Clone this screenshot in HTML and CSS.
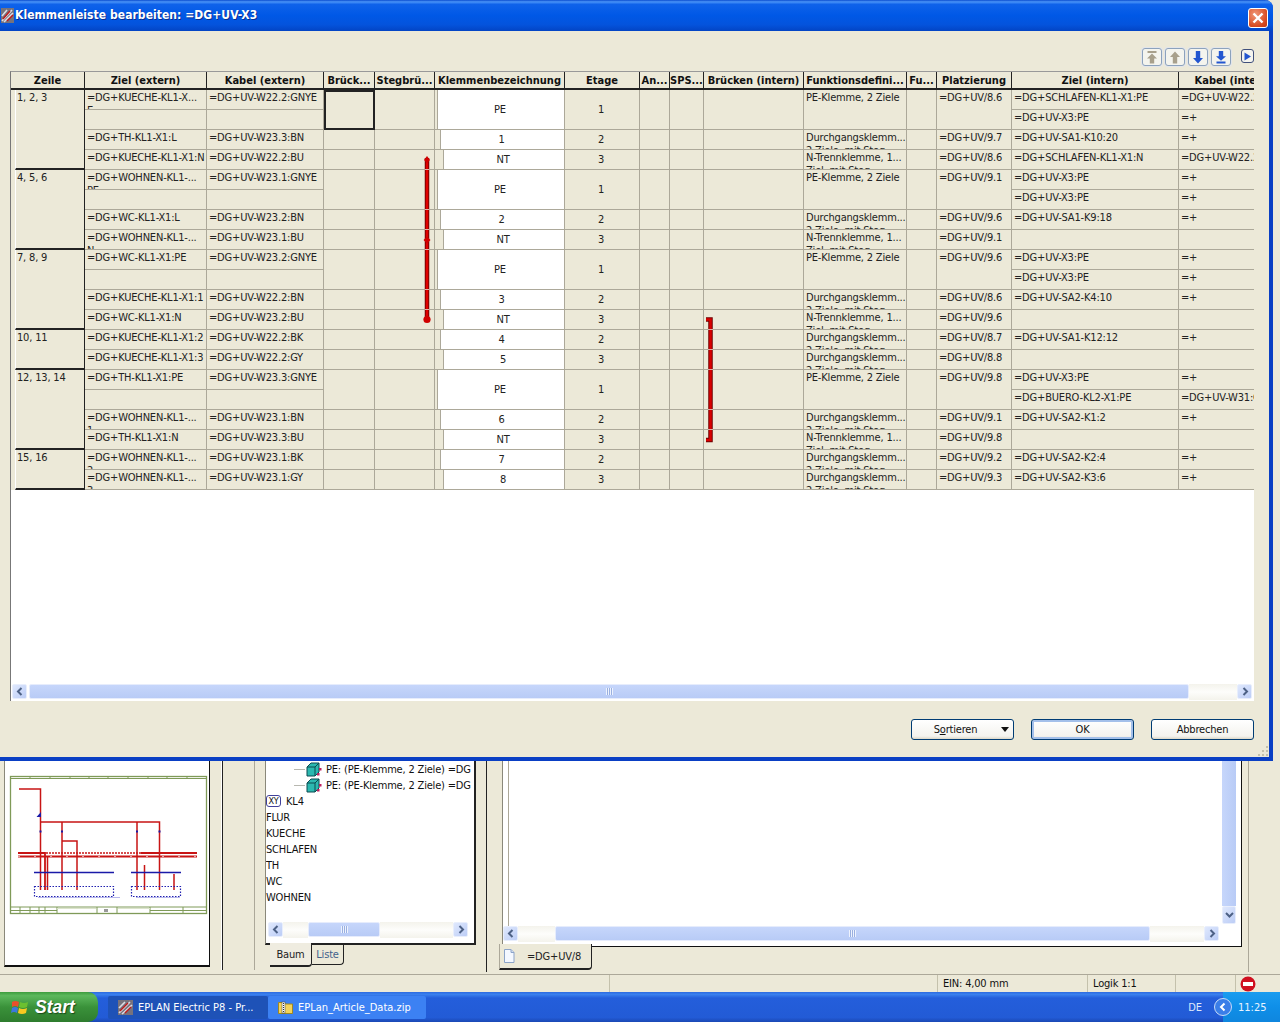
FILE: index.html
```html
<!DOCTYPE html>
<html lang="de">
<head>
<meta charset="UTF-8">
<title>Klemmenleiste bearbeiten</title>
<link rel="stylesheet" href="styles.css">
</head>
<body>

<div class="dialog">
	<div class="titlebar">
		<svg class="app-icon" width="13" height="15" viewBox="0 0 13 15"><rect width="13" height="15" fill="#77727c"/><path d="M1 13L11 2M3 14L12 5M1 8L6 2" stroke="#dcdce4" stroke-width="1.600"/><path d="M2 11L9 3M6 13L12 7" stroke="#c01818" stroke-width="1.400"/></svg>
		<span class="title-text">Klemmenleiste bearbeiten: =DG+UV-X3</span>
		<span class="close-btn"><svg width="12" height="12" viewBox="0 0 12 12"><path d="M1.500 1.500L10.500 10.500M10.500 1.500L1.500 10.500" stroke="#fff" stroke-width="2.400"/></svg></span>
	</div>
	<div class="dialog-body">
		<div class="toolbar">
			<span class="tool-btn"><svg width="14" height="14" viewBox="0 0 14 14"><path d="M2.500 1H11.500V3H2.500ZM7 3.500L12 8.500H9.200V13.500H4.800V8.500H2Z" fill="#a8a08c"/></svg></span>
			<span class="tool-btn"><svg width="14" height="14" viewBox="0 0 14 14"><path d="M7 1.500L12 7H9.200V13.500H4.800V7H2Z" fill="#a8a08c"/></svg></span>
			<span class="tool-btn"><svg width="14" height="14" viewBox="0 0 14 14"><path d="M7 13.500L2 8H4.800V1H9.200V8H12Z" fill="#2356d0"/></svg></span>
			<span class="tool-btn"><svg width="14" height="14" viewBox="0 0 14 14"><path d="M2.500 11.500H11.500V13.500H2.500ZM7 10.800L2 6.300H4.800V1H9.200V6.300H12Z" fill="#2356d0"/></svg></span>
			<span class="tool-btn small"><svg width="9" height="9" viewBox="0 0 9 9"><path d="M1.500 .5L8 4.500L1.500 8.500Z" fill="#2356d0"/></svg></span>
		</div>

		<div class="grid">
			<div class="grid-body">
				<table class="terminals">
					<colgroup>
						<col class="w74"><col class="w122"><col class="w117"><col class="w51"><col class="w60">
						<col class="w130"><col class="w75"><col class="w30"><col class="w34"><col class="w100">
						<col class="w103"><col class="w30"><col class="w75"><col class="w167"><col class="w110">
					</colgroup>
					<thead>
						<tr>
							<th>Zeile</th><th>Ziel (extern)</th><th>Kabel (extern)</th><th>Brück...</th><th>Stegbrü...</th>
							<th>Klemmenbezeichnung</th><th>Etage</th><th>An...</th><th>SPS...</th><th>Brücken (intern)</th>
							<th>Funktionsdefini...</th><th>Fu...</th><th>Platzierung</th><th>Ziel (intern)</th><th>Kabel (intern)</th>
						</tr>
					</thead>
					<tbody>
						<!-- 1, 2, 3 -->
						<tr>
							<td class="zeile" rowspan="4"><div class="z4">1, 2, 3</div></td>
							<td><div class="clip">=DG+KUECHE-KL1-X...<br>E</div></td><td><div class="clip">=DG+UV-W22.2:GNYE</div></td>
							<td class="selected" rowspan="2"></td><td rowspan="2"></td>
							<td class="kb" rowspan="2"><div class="kb-pe">PE</div></td><td class="num" rowspan="2">1</td>
							<td rowspan="2"></td><td rowspan="2"></td><td rowspan="2"></td>
							<td rowspan="2"><div class="clip">PE-Klemme, 2 Ziele</div></td><td rowspan="2"></td>
							<td rowspan="2"><div class="clip">=DG+UV/8.6</div></td>
							<td><div class="clip">=DG+SCHLAFEN-KL1-X1:PE</div></td><td><div class="clip">=DG+UV-W22.2:GNYE</div></td>
						</tr>
						<tr>
							<td></td><td></td>
							<td><div class="clip">=DG+UV-X3:PE</div></td><td><div class="clip">=+</div></td>
						</tr>
						<tr>
							<td><div class="clip">=DG+TH-KL1-X1:L</div></td><td><div class="clip">=DG+UV-W23.3:BN</div></td><td></td><td></td>
							<td class="kb"><div class="kb-2">1</div></td><td class="num">2</td><td></td><td></td><td></td>
							<td><div class="clip">Durchgangsklemm...<br>2 Ziele, mit Steg</div></td><td></td><td><div class="clip">=DG+UV/9.7</div></td>
							<td><div class="clip">=DG+UV-SA1-K10:20</div></td><td><div class="clip">=+</div></td>
						</tr>
						<tr>
							<td><div class="clip">=DG+KUECHE-KL1-X1:N</div></td><td><div class="clip">=DG+UV-W22.2:BU</div></td><td></td><td></td>
							<td class="kb"><div class="kb-3">NT</div></td><td class="num">3</td><td></td><td></td><td></td>
							<td><div class="clip">N-Trennklemme, 1...<br>Ziel, mit Steg</div></td><td></td><td><div class="clip">=DG+UV/8.6</div></td>
							<td><div class="clip">=DG+SCHLAFEN-KL1-X1:N</div></td><td><div class="clip">=DG+UV-W22.2:BU</div></td>
						</tr>
						<!-- 4, 5, 6 -->
						<tr>
							<td class="zeile" rowspan="4"><div class="z4">4, 5, 6</div></td>
							<td><div class="clip">=DG+WOHNEN-KL1-...<br>PE</div></td><td><div class="clip">=DG+UV-W23.1:GNYE</div></td>
							<td rowspan="2"></td><td rowspan="2"></td>
							<td class="kb" rowspan="2"><div class="kb-pe">PE</div></td><td class="num" rowspan="2">1</td>
							<td rowspan="2"></td><td rowspan="2"></td><td rowspan="2"></td>
							<td rowspan="2"><div class="clip">PE-Klemme, 2 Ziele</div></td><td rowspan="2"></td>
							<td rowspan="2"><div class="clip">=DG+UV/9.1</div></td>
							<td><div class="clip">=DG+UV-X3:PE</div></td><td><div class="clip">=+</div></td>
						</tr>
						<tr>
							<td></td><td></td>
							<td><div class="clip">=DG+UV-X3:PE</div></td><td><div class="clip">=+</div></td>
						</tr>
						<tr>
							<td><div class="clip">=DG+WC-KL1-X1:L</div></td><td><div class="clip">=DG+UV-W23.2:BN</div></td><td></td><td></td>
							<td class="kb"><div class="kb-2">2</div></td><td class="num">2</td><td></td><td></td><td></td>
							<td><div class="clip">Durchgangsklemm...<br>2 Ziele, mit Steg</div></td><td></td><td><div class="clip">=DG+UV/9.6</div></td>
							<td><div class="clip">=DG+UV-SA1-K9:18</div></td><td><div class="clip">=+</div></td>
						</tr>
						<tr>
							<td><div class="clip">=DG+WOHNEN-KL1-...<br>N</div></td><td><div class="clip">=DG+UV-W23.1:BU</div></td><td></td><td></td>
							<td class="kb"><div class="kb-3">NT</div></td><td class="num">3</td><td></td><td></td><td></td>
							<td><div class="clip">N-Trennklemme, 1...<br>Ziel, mit Steg</div></td><td></td><td><div class="clip">=DG+UV/9.1</div></td>
							<td></td><td></td>
						</tr>
						<!-- 7, 8, 9 -->
						<tr>
							<td class="zeile" rowspan="4"><div class="z4">7, 8, 9</div></td>
							<td><div class="clip">=DG+WC-KL1-X1:PE</div></td><td><div class="clip">=DG+UV-W23.2:GNYE</div></td>
							<td rowspan="2"></td><td rowspan="2"></td>
							<td class="kb" rowspan="2"><div class="kb-pe">PE</div></td><td class="num" rowspan="2">1</td>
							<td rowspan="2"></td><td rowspan="2"></td><td rowspan="2"></td>
							<td rowspan="2"><div class="clip">PE-Klemme, 2 Ziele</div></td><td rowspan="2"></td>
							<td rowspan="2"><div class="clip">=DG+UV/9.6</div></td>
							<td><div class="clip">=DG+UV-X3:PE</div></td><td><div class="clip">=+</div></td>
						</tr>
						<tr>
							<td></td><td></td>
							<td><div class="clip">=DG+UV-X3:PE</div></td><td><div class="clip">=+</div></td>
						</tr>
						<tr>
							<td><div class="clip">=DG+KUECHE-KL1-X1:1</div></td><td><div class="clip">=DG+UV-W22.2:BN</div></td><td></td><td></td>
							<td class="kb"><div class="kb-2">3</div></td><td class="num">2</td><td></td><td></td><td></td>
							<td><div class="clip">Durchgangsklemm...<br>2 Ziele, mit Steg</div></td><td></td><td><div class="clip">=DG+UV/8.6</div></td>
							<td><div class="clip">=DG+UV-SA2-K4:10</div></td><td><div class="clip">=+</div></td>
						</tr>
						<tr>
							<td><div class="clip">=DG+WC-KL1-X1:N</div></td><td><div class="clip">=DG+UV-W23.2:BU</div></td><td></td><td></td>
							<td class="kb"><div class="kb-3">NT</div></td><td class="num">3</td><td></td><td></td><td></td>
							<td><div class="clip">N-Trennklemme, 1...<br>Ziel, mit Steg</div></td><td></td><td><div class="clip">=DG+UV/9.6</div></td>
							<td></td><td></td>
						</tr>
						<!-- 10, 11 -->
						<tr>
							<td class="zeile" rowspan="2"><div class="z2">10, 11</div></td>
							<td><div class="clip">=DG+KUECHE-KL1-X1:2</div></td><td><div class="clip">=DG+UV-W22.2:BK</div></td><td></td><td></td>
							<td class="kb"><div class="kb-2">4</div></td><td class="num">2</td><td></td><td></td><td></td>
							<td><div class="clip">Durchgangsklemm...<br>2 Ziele, mit Steg</div></td><td></td><td><div class="clip">=DG+UV/8.7</div></td>
							<td><div class="clip">=DG+UV-SA1-K12:12</div></td><td><div class="clip">=+</div></td>
						</tr>
						<tr>
							<td><div class="clip">=DG+KUECHE-KL1-X1:3</div></td><td><div class="clip">=DG+UV-W22.2:GY</div></td><td></td><td></td>
							<td class="kb"><div class="kb-3">5</div></td><td class="num">3</td><td></td><td></td><td></td>
							<td><div class="clip">Durchgangsklemm...<br>2 Ziele, mit Steg</div></td><td></td><td><div class="clip">=DG+UV/8.8</div></td>
							<td></td><td></td>
						</tr>
						<!-- 12, 13, 14 -->
						<tr>
							<td class="zeile" rowspan="4"><div class="z4">12, 13, 14</div></td>
							<td><div class="clip">=DG+TH-KL1-X1:PE</div></td><td><div class="clip">=DG+UV-W23.3:GNYE</div></td>
							<td rowspan="2"></td><td rowspan="2"></td>
							<td class="kb" rowspan="2"><div class="kb-pe">PE</div></td><td class="num" rowspan="2">1</td>
							<td rowspan="2"></td><td rowspan="2"></td><td rowspan="2"></td>
							<td rowspan="2"><div class="clip">PE-Klemme, 2 Ziele</div></td><td rowspan="2"></td>
							<td rowspan="2"><div class="clip">=DG+UV/9.8</div></td>
							<td><div class="clip">=DG+UV-X3:PE</div></td><td><div class="clip">=+</div></td>
						</tr>
						<tr>
							<td></td><td></td>
							<td><div class="clip">=DG+BUERO-KL2-X1:PE</div></td><td><div class="clip">=DG+UV-W31:GNYE</div></td>
						</tr>
						<tr>
							<td><div class="clip">=DG+WOHNEN-KL1-...<br>1</div></td><td><div class="clip">=DG+UV-W23.1:BN</div></td><td></td><td></td>
							<td class="kb"><div class="kb-2">6</div></td><td class="num">2</td><td></td><td></td><td></td>
							<td><div class="clip">Durchgangsklemm...<br>2 Ziele, mit Steg</div></td><td></td><td><div class="clip">=DG+UV/9.1</div></td>
							<td><div class="clip">=DG+UV-SA2-K1:2</div></td><td><div class="clip">=+</div></td>
						</tr>
						<tr>
							<td><div class="clip">=DG+TH-KL1-X1:N</div></td><td><div class="clip">=DG+UV-W23.3:BU</div></td><td></td><td></td>
							<td class="kb"><div class="kb-3">NT</div></td><td class="num">3</td><td></td><td></td><td></td>
							<td><div class="clip">N-Trennklemme, 1...<br>Ziel, mit Steg</div></td><td></td><td><div class="clip">=DG+UV/9.8</div></td>
							<td></td><td></td>
						</tr>
						<!-- 15, 16 -->
						<tr>
							<td class="zeile" rowspan="2"><div class="z2">15, 16</div></td>
							<td><div class="clip">=DG+WOHNEN-KL1-...<br>2</div></td><td><div class="clip">=DG+UV-W23.1:BK</div></td><td></td><td></td>
							<td class="kb"><div class="kb-2">7</div></td><td class="num">2</td><td></td><td></td><td></td>
							<td><div class="clip">Durchgangsklemm...<br>2 Ziele, mit Steg</div></td><td></td><td><div class="clip">=DG+UV/9.2</div></td>
							<td><div class="clip">=DG+UV-SA2-K2:4</div></td><td><div class="clip">=+</div></td>
						</tr>
						<tr>
							<td><div class="clip">=DG+WOHNEN-KL1-...<br>3</div></td><td><div class="clip">=DG+UV-W23.1:GY</div></td><td></td><td></td>
							<td class="kb"><div class="kb-3">8</div></td><td class="num">3</td><td></td><td></td><td></td>
							<td><div class="clip">Durchgangsklemm...<br>2 Ziele, mit Steg</div></td><td></td><td><div class="clip">=DG+UV/9.3</div></td>
							<td><div class="clip">=DG+UV-SA2-K3:6</div></td><td><div class="clip">=+</div></td>
						</tr>
					</tbody>
				</table>
				<!-- bridges drawn over the table, coordinates are page pixels -->
				<svg class="bridges" width="1243" height="400" viewBox="11 72 1243 400">
					<path d="M427 158V320" stroke="#6e0000" stroke-width="4.500" fill="none"/>
					<path d="M427 158V320" stroke="#e00000" stroke-width="2.600" fill="none"/>
					<path d="M424 160L427 156L430 160L427 163ZM423.500 240L427 236.500L430.500 240L427 243.500Z" fill="#d00000"/>
					<circle cx="427" cy="319.500" r="3.600" fill="#d00000"/>
					<path d="M706 319.500H710.500V440H706" stroke="#6e0000" stroke-width="4.500" fill="none"/>
					<path d="M706 319.500H710.500V440H706" stroke="#d80000" stroke-width="2.600" fill="none"/>
					<path d="M424.500 169.500h5M424.500 209.500h5M424.500 229.500h5M424.500 249.500h5M424.500 289.500h5M424.500 309.500h5M708 329.500h5M708 349.500h5M708 369.500h5M708 409.500h5M708 429.500h5" stroke="#e0b0a8"/>
				</svg>
			</div>
			<div class="hscroll main-hscroll">
				<span class="sb-btn"><svg width="8" height="9" viewBox="0 0 8 9"><path d="M5.500 1L2 4.500L5.500 8" fill="none" stroke="#4d6185" stroke-width="2"/></svg></span>
				<span class="sb-thumb main-thumb"><i class="grip"></i></span>
				<span class="sb-track"></span>
				<span class="sb-btn"><svg width="8" height="9" viewBox="0 0 8 9"><path d="M2.500 1L6 4.500L2.500 8" fill="none" stroke="#4d6185" stroke-width="2"/></svg></span>
			</div>
		</div>

		<div class="dialog-footer">
			<span class="btn sort-btn"><span class="sort-label">S<u>o</u>rtieren</span><i class="caret"></i></span>
			<span class="btn default-btn">OK</span>
			<span class="btn">Abbrechen</span>
		</div>
	</div>
	<svg class="size-grip" width="12" height="12" viewBox="0 0 12 12"><path d="M9 1h2v2H9zM5 5h2v2H5zM9 5h2v2H9zM1 9h2v2H1zM5 9h2v2H5zM9 9h2v2H9z" fill="#c4c1ac"/></svg>
</div>

<div class="workspace">
	<div class="thumb-pane">
		<svg width="204" height="204" viewBox="5 1 204 204">
			<g fill="none" stroke="#7f9a58">
				<rect x="10.500" y="16.500" width="196" height="137" stroke-width="1.300"/>
				<path d="M10.500 18.500H206.500M30 16.500V18.500M50 16.500V18.500M70 16.500V18.500M89 16.500V18.500M108 16.500V18.500M128 16.500V18.500M148 16.500V18.500M167 16.500V18.500M187 16.500V18.500"/>
				<path d="M10.500 147H206.500M10.500 150.500H57M20 147V153M30 147V153M39 147V153M45 147V153M57 147V153M97 147V153M117 147V153M150 147V153M183 147V153M150 150.500H206"/>
			</g>
			<path d="M57 148.500H96M118 148.500H150" stroke="#dce4cc" fill="none"/>
			<path d="M104 149h4v3h-4z" fill="#9a9a9a"/>
			<g fill="none" stroke="#c81414" stroke-width="1.500">
				<path d="M19 29H40.500V130M40.500 62H159.500V130M62 62V130M62 81H77V130M137 62V130"/>
				<path d="M18 93H45V130M141 93H197M18 96.500H197" stroke-width="1.800"/>
				<path d="M47.500 97V130M144.500 105V130M174 114V130"/>
			</g>
			<path d="M46 93H141" stroke="#c81414" stroke-width="1.500" stroke-dasharray="2 1" fill="none"/>
			<path d="M18 96.500H197" stroke="#fff" stroke-width=".6" stroke-dasharray="2 14" fill="none"/>
			<path d="M34 112.500H114M131 112.500H181" stroke="#1a1aa8" stroke-width="1.300" fill="none"/>
			<g fill="none" stroke="#2020b0" stroke-width="1.200" stroke-dasharray="1.500 1.500">
				<rect x="34.500" y="126.500" width="79" height="10"/>
				<rect x="131.500" y="126.500" width="49" height="10"/>
			</g>
			<path d="M36.500 57L41 52V57ZM39.500 70.500h2v2h-2ZM61 70.500h2v2h-2ZM136 70.500h2v2h-2ZM158.500 70.500h2v2h-2Z" fill="#1a1aa8"/>
			<path d="M38 137.500H120M136 137.500H180" stroke="#b8b8ec" fill="none"/>
		</svg>
	</div>
	<div class="sash"></div>
	<div class="gap-pane"></div>

	<div class="tree-col">
		<div class="tree-box">
			<div class="tree-list">
				<div class="tree-row leaf">
					<svg width="16" height="15" viewBox="0 0 16 15"><path d="M1 5L5 1H13V10L9 14H1Z" fill="#2cb8b0" stroke="#0a4a50"/><path d="M1 5H9V14M9 5L13 1" fill="none" stroke="#0a4a50"/><rect x="13" y="6" width="2.500" height="2.500" fill="#c02060"/><rect x="11" y="11" width="2.500" height="2.500" fill="#c02060"/></svg>
					<span>PE: (PE-Klemme, 2 Ziele) =DG</span>
				</div>
				<div class="tree-row leaf">
					<svg width="16" height="15" viewBox="0 0 16 15"><path d="M1 5L5 1H13V10L9 14H1Z" fill="#2cb8b0" stroke="#0a4a50"/><path d="M1 5H9V14M9 5L13 1" fill="none" stroke="#0a4a50"/><rect x="13" y="6" width="2.500" height="2.500" fill="#c02060"/><rect x="11" y="11" width="2.500" height="2.500" fill="#c02060"/></svg>
					<span>PE: (PE-Klemme, 2 Ziele) =DG</span>
				</div>
				<div class="tree-row"><span class="xy-icon">XY</span><span>KL4</span></div>
				<div class="tree-row">FLUR</div>
				<div class="tree-row">KUECHE</div>
				<div class="tree-row">SCHLAFEN</div>
				<div class="tree-row">TH</div>
				<div class="tree-row">WC</div>
				<div class="tree-row">WOHNEN</div>
			</div>
			<div class="hscroll tree-hscroll">
				<span class="sb-btn"><svg width="8" height="9" viewBox="0 0 8 9"><path d="M5.500 1L2 4.500L5.500 8" fill="none" stroke="#4d6185" stroke-width="2"/></svg></span>
				<span class="sb-track tree-track-a"></span>
				<span class="sb-thumb tree-thumb"><i class="grip"></i></span>
				<span class="sb-track"></span>
				<span class="sb-btn"><svg width="8" height="9" viewBox="0 0 8 9"><path d="M2.500 1L6 4.500L2.500 8" fill="none" stroke="#4d6185" stroke-width="2"/></svg></span>
			</div>
		</div>
		<div class="tabs tree-tabs">
			<span class="tab active-tab baum-tab">Baum</span>
			<span class="tab liste-tab">Liste</span>
		</div>
	</div>

	<div class="doc-col">
		<div class="doc-box">
			<div class="doc-top">
				<div class="doc-strip"></div>
				<div class="doc-main"></div>
				<div class="vscroll">
					<span class="vsb-thumb"></span>
					<span class="sb-btn vsb-btn"><svg width="9" height="8" viewBox="0 0 9 8"><path d="M1 2L4.500 5.500L8 2" fill="none" stroke="#4d6185" stroke-width="2"/></svg></span>
				</div>
			</div>
			<div class="hscroll doc-hscroll">
				<span class="sb-btn"><svg width="8" height="9" viewBox="0 0 8 9"><path d="M5.500 1L2 4.500L5.500 8" fill="none" stroke="#4d6185" stroke-width="2"/></svg></span>
				<span class="sb-track doc-track-a"></span>
				<span class="sb-thumb doc-thumb"><i class="grip"></i></span>
				<span class="sb-track"></span>
				<span class="sb-btn"><svg width="8" height="9" viewBox="0 0 8 9"><path d="M2.500 1L6 4.500L2.500 8" fill="none" stroke="#4d6185" stroke-width="2"/></svg></span>
			</div>
		</div>
		<div class="tabs doc-tabs">
			<span class="tab active-tab doc-tab">
				<svg width="12" height="14" viewBox="0 0 12 14"><path d="M1.500 .5H8L11 3.500V13.500H1.500Z" fill="#f4f8ff" stroke="#8ca4c8"/><path d="M8 .5V3.500H11" fill="#d0dcf0" stroke="#8ca4c8"/></svg>
				<span>=DG+UV/8</span>
			</span>
		</div>
	</div>
</div>

<div class="statusbar">
	<span class="st st-a"></span>
	<span class="st st-b"></span>
	<span class="st st-c">EIN: 4,00 mm</span>
	<span class="st st-d">Logik 1:1</span>
	<span class="st st-e"></span>
	<span class="st st-f"><svg width="16" height="16" viewBox="0 0 16 16"><circle cx="8" cy="8" r="7.500" fill="#d01020"/><rect x="3" y="6" width="10" height="4" fill="#fff"/></svg></span>
</div>

<div class="taskbar">
	<span class="start-btn">
		<svg width="18" height="17" viewBox="0 0 18 17"><path d="M1 3Q4 1 8 3L7 8Q4 6 1 8Z" fill="#e8502a"/><path d="M9 3Q13 5 17 3L16 8Q12 10 8 8Z" fill="#6cc030"/><path d="M1 9Q4 7 7 9L6 14Q3 12 0 14Z" fill="#3c78e0"/><path d="M8 9Q12 11 16 9L15 14Q11 16 7 14Z" fill="#f8c820"/></svg>
		<span class="start-text">Start</span>
	</span>
	<span class="task pressed">
		<svg width="15" height="15" viewBox="0 0 15 15"><rect width="15" height="15" fill="#77727c"/><path d="M1 13L12 2M4 14L14 5M1 8L7 2" stroke="#dcdce4" stroke-width="1.600"/><path d="M2 11L10 3M7 13L13 7" stroke="#c01818" stroke-width="1.400"/></svg>
		<span>EPLAN Electric P8 - Pr...</span>
	</span>
	<span class="task">
		<svg width="15" height="14" viewBox="0 0 15 14"><path d="M.5 2.500H6L7.500 4H14.500V13.500H.5Z" fill="#f4d45c" stroke="#a08820"/><rect x="4" y="2" width="3" height="11" fill="#fff" stroke="#555" stroke-width=".6"/><path d="M5.500 3V12" stroke="#333" stroke-dasharray="1 1"/></svg>
		<span>EPLan_Article_Data.zip</span>
	</span>
	<span class="lang">DE</span>
	<span class="tray">
		<span class="tray-chevron"><svg width="10" height="10" viewBox="0 0 10 10"><path d="M6.500 1.500L3 5L6.500 8.500" fill="none" stroke="#fff" stroke-width="2"/></svg></span>
		<span class="clock">11:25</span>
	</span>
</div>

</body>
</html>
```

FILE: styles.css
```css
* {
	box-sizing: border-box;
}
html,
body {
	margin: 0;
	padding: 0;
}
body {
	width: 1280px;
	height: 1022px;
	overflow: hidden;
	background: #ece9d8;
	font-family: "DejaVu Sans Condensed", "DejaVu Sans", sans-serif;
	font-size: 11px;
	line-height: 13px;
	letter-spacing: -0.18px;
	color: #222;
}

/* dialog */
.dialog {
	position: relative;
	width: 1273px;
	height: 761px;
	background: #ece9d8;
	border-right: 4px solid #0a3fc4;
	border-bottom: 4px solid #0a3fc4;
	border-top-right-radius: 8px;
}
.titlebar {
	display: flex;
	align-items: center;
	height: 31px;
	margin-right: -4px;
	padding: 0 5px 0 1px;
	background: linear-gradient(#0a4ccf 0, #4a94f8 6%, #0f62ea 14%, #0058e6 50%, #0453dc 80%, #0344c4 100%);
	border-top-right-radius: 8px;
}
.app-icon {
	margin-right: 1px;
}
.title-text {
	flex: 1;
	color: #fff;
	font-size: 12px;
	font-weight: bold;
	text-shadow: 1px 1px 0 #0a2f90;
	letter-spacing: .05px;
}
.close-btn {
	display: flex;
	align-items: center;
	justify-content: center;
	width: 20px;
	height: 20px;
	margin-top: 4px;
	border: 1px solid #fff;
	border-radius: 3px;
	background: radial-gradient(circle at 35% 30%, #f09878, #d84a20 70%, #c03810);
}
.dialog-body {
	padding: 17px 15px 0 10px;
}
.toolbar {
	display: flex;
	justify-content: flex-end;
	align-items: flex-start;
	gap: 3px;
	height: 18px;
	margin-bottom: 5px;
}
.tool-btn {
	display: flex;
	align-items: center;
	justify-content: center;
	width: 20px;
	height: 18px;
	border: 1px solid #8ca2bc;
	border-radius: 3px;
	background: #f4f4ee;
	box-shadow: 0 0 0 1px #e2e5ea;
}
.tool-btn.small {
	width: 13px;
	height: 14px;
	margin-left: 7px;
	margin-top: 1px;
	box-shadow: none;
	border-color: #40507c;
}

/* terminal table */
.grid {
	display: flex;
	flex-direction: column;
	height: 630px;
	background: #fff;
	border-left: 1px solid #777;
	border-top: 1px solid #999;
}
.grid-body {
	position: relative;
	flex: 1;
	overflow: hidden;
}
.bridges {
	position: absolute;
	left: 0;
	top: 0;
}
.terminals {
	table-layout: fixed;
	width: 1278px;
	border-collapse: separate;
	border-spacing: 0;
	background: #ece9d8;
}
.w30 { width: 30px; }
.w34 { width: 34px; }
.w51 { width: 51px; }
.w60 { width: 60px; }
.w74 { width: 74px; }
.w75 { width: 75px; }
.w100 { width: 100px; }
.w103 { width: 103px; }
.w110 { width: 110px; }
.w117 { width: 117px; }
.w122 { width: 122px; }
.w130 { width: 130px; }
.w167 { width: 167px; }
.terminals th {
	height: 18px;
	padding: 0;
	overflow: hidden;
	white-space: nowrap;
	font-weight: bold;
	font-size: 11px;
	letter-spacing: 0;
	text-align: center;
	color: #111;
	background: #ece9d8;
	border-right: 1px solid #222;
	border-bottom: 2px solid #222;
}
.terminals td {
	height: 20px;
	padding: 0;
	vertical-align: top;
	border-right: 1px solid #aca899;
	border-bottom: 1px solid #aca899;
}
.clip {
	height: 19px;
	padding: 1px 0 0 2px;
	overflow: hidden;
	white-space: nowrap;
}
.terminals td.num {
	vertical-align: middle;
	text-align: center;
	padding-right: 2px;
}
.terminals td.zeile {
	padding-left: 4px;
	border-right: 0;
	border-bottom: 0;
}
.z4,
.z2 {
	padding: 1px 0 0 1px;
	background: #ece9d8;
	border-left: 1px solid #fff;
	border-right: 1px solid #222;
	border-bottom: 2px solid #222;
}
.z4 {
	height: 80px;
}
.z2 {
	height: 40px;
}
.terminals td.selected {
	border: 2px solid #222;
}
.kb-pe,
.kb-2,
.kb-3 {
	padding-right: 2px;
	background: #fff;
	border-left: 1px solid #aca899;
	text-align: center;
}
.kb-pe {
	height: 39px;
	line-height: 39px;
	margin-left: 2px;
}
.kb-2 {
	height: 19px;
	line-height: 19px;
	margin-left: 5px;
}
.kb-3 {
	height: 19px;
	line-height: 19px;
	margin-left: 8px;
}

/* scrollbars */
.hscroll {
	display: flex;
	height: 16px;
	flex: none;
}
.sb-btn {
	display: flex;
	align-items: center;
	justify-content: center;
	flex: none;
	width: 15px;
	height: 15px;
	background: linear-gradient(135deg, #dfe8fd, #bccdf6);
	border: 1px solid #e8eefc;
	border-radius: 2px;
}
.sb-track {
	flex: 1;
	background: linear-gradient(#f4f3ec, #fdfdfb 50%, #f4f3ec);
}
.sb-thumb {
	display: flex;
	align-items: center;
	justify-content: center;
	flex: none;
	height: 15px;
	background: linear-gradient(#c6d6fb, #b8cbf6);
	border: 1px solid #e6ecfc;
	border-radius: 2px;
}
.grip {
	display: block;
	width: 7px;
	height: 7px;
	background: repeating-linear-gradient(90deg, #eef3fe 0 1px, #9ab0e0 1px 2px);
}
.main-hscroll {
	margin-bottom: 1px;
	padding: 0 2px 0 1px;
}
.main-thumb {
	width: 1160px;
	margin-left: 2px;
}

/* dialog buttons */
.dialog-footer {
	display: flex;
	justify-content: flex-end;
	gap: 17px;
	margin-top: 18px;
}
.btn {
	display: flex;
	align-items: center;
	justify-content: center;
	width: 103px;
	height: 21px;
	border: 1px solid #003c74;
	border-radius: 3px;
	background: linear-gradient(#fff, #f4f3ee 85%, #dcd8c8);
	color: #111;
}
.default-btn {
	box-shadow: inset 0 0 0 2px #a4c0ea;
}
.sort-btn {
	position: relative;
	padding-right: 14px;
}
.caret {
	position: absolute;
	right: 4px;
	top: 7px;
	border-left: 4px solid transparent;
	border-right: 4px solid transparent;
	border-top: 5px solid #111;
}
.size-grip {
	position: absolute;
	right: 0;
	bottom: 0;
}

/* main window behind the dialog */
.workspace {
	display: flex;
	height: 214px;
	border-bottom: 1px solid #aca899;
	box-shadow: 0 1px 0 #f6f5ee;
}
.thumb-pane {
	flex: none;
	width: 206px;
	height: 206px;
	margin-left: 4px;
	background: #fff;
	border-left: 1px solid #8a887a;
	border-right: 1px solid #111;
	border-bottom: 2px solid #111;
}
.thumb-pane svg {
	display: block;
}
.sash {
	flex: none;
	width: 12px;
	height: 209px;
	border-right: 1px solid #fff;
}
.gap-pane {
	flex: none;
	width: 32px;
	height: 209px;
	border-left: 1px solid #222;
}
.tree-col {
	flex: none;
	width: 232px;
	height: 209px;
	padding-left: 10px;
	border-left: 1px solid #aca899;
}
.tree-box {
	width: 211px;
	height: 184px;
	background: #fff;
	border-left: 1px solid #8a887a;
	border-right: 2px solid #222;
	border-bottom: 2px solid #222;
}
.tree-list {
	height: 161px;
	overflow: hidden;
}
.tree-row {
	display: flex;
	align-items: center;
	height: 16px;
	white-space: nowrap;
	color: #111;
}
.tree-row svg {
	flex: none;
}
.tree-row.leaf {
	gap: 4px;
	padding-left: 40px;
	background: linear-gradient(90deg, transparent 28px, #b8b8b0 28px, #b8b8b0 39px, transparent 39px) no-repeat 0 8px / 100% 1px;
}
.xy-icon {
	flex: none;
	width: 15px;
	height: 12px;
	margin-right: 5px;
	border: 1px solid #40409a;
	border-radius: 3px;
	font-size: 9px;
	line-height: 10px;
	text-align: center;
}
.tree-hscroll {
	margin: 0 6px 0 2px;
}
.tree-track-a {
	flex: none;
	width: 25px;
}
.tree-thumb {
	width: 72px;
}
.tabs {
	display: flex;
	align-items: flex-start;
}
.tab {
	display: flex;
	align-items: center;
	justify-content: center;
	border-right: 1px solid #222;
	border-bottom: 1px solid #222;
	border-bottom-right-radius: 4px;
}
.tree-tabs {
	margin-left: 5px;
}
.baum-tab {
	width: 42px;
	height: 24px;
	margin-top: -2px;
	background: #efece0;
	border-bottom-width: 2px;
}
.liste-tab {
	width: 32px;
	height: 20px;
	color: #42628c;
}
.doc-col {
	flex: none;
	width: 763px;
	height: 211px;
	padding-left: 15px;
	border-left: 1px solid #222;
	border-right: 1px solid #aca899;
}
.doc-box {
	width: 740px;
	height: 186px;
	background: #fff;
	border-left: 1px solid #8a887a;
	border-right: 1px solid #111;
	border-bottom: 1px solid #111;
}
.doc-top {
	display: flex;
	height: 165px;
}
.doc-strip {
	flex: none;
	width: 6px;
	border-right: 1px solid #aca899;
}
.doc-main {
	flex: 1;
}
.vscroll {
	display: flex;
	flex-direction: column;
	flex: none;
	width: 14px;
	margin-right: 5px;
}
.vsb-thumb {
	height: 145px;
	background: linear-gradient(90deg, #c6d6fb, #b8cbf6);
}
.vsb-btn {
	width: 14px;
	height: 18px;
}
.doc-hscroll {
	margin-right: 22px;
}
.doc-track-a {
	flex: none;
	width: 37px;
}
.doc-thumb {
	width: 595px;
}
.doc-tabs {
	margin-left: -3px;
	margin-top: -3px;
}
.doc-tab {
	justify-content: flex-start;
	gap: 12px;
	width: 93px;
	height: 26px;
	padding-left: 3px;
	background: #ece9d8;
	border-bottom-width: 2px;
	border-left: 1px solid #aca899;
}

/* status bar */
.statusbar {
	display: flex;
	height: 17px;
	background: #ece9d8;
}
.st {
	display: flex;
	align-items: center;
	padding-left: 5px;
	border-right: 1px solid #c4c1ac;
	color: #111;
}
.st-a { width: 610px; }
.st-b { width: 328px; }
.st-c { width: 150px; }
.st-d { width: 88px; }
.st-e { width: 60px; }
.st-f { width: 44px; padding-left: 4px; border-right: 0; }

/* taskbar */
.taskbar {
	display: flex;
	align-items: center;
	height: 30px;
	background: linear-gradient(#2c6ae0 0, #3a80ee 8%, #245edb 20%, #225bd6 85%, #1a48b4 100%);
	color: #fff;
	letter-spacing: 0;
}
.start-btn {
	display: flex;
	align-items: center;
	gap: 6px;
	width: 98px;
	height: 30px;
	padding-left: 11px;
	background: linear-gradient(#3d9c3d 0, #5cb85c 12%, #3a923a 50%, #2e7c2e 100%);
	border-top-right-radius: 10px;
	border-bottom-right-radius: 10px;
}
.start-text {
	font-family: "Liberation Sans", sans-serif;
	font-size: 17.500px;
	font-weight: bold;
	font-style: italic;
	text-shadow: 1px 1px 1px #1a4a1a;
}
.task {
	display: flex;
	align-items: center;
	gap: 5px;
	width: 158px;
	height: 23px;
	padding-left: 10px;
	background: #3c81f3;
	border-radius: 2px;
	white-space: nowrap;
}
.task.pressed {
	width: 160px;
	margin-left: 10px;
	background: #1e52b7;
}
.lang {
	margin-left: auto;
	margin-right: 21px;
	color: #dfe8fb;
}
.tray {
	position: relative;
	display: flex;
	align-items: center;
	width: 57px;
	height: 30px;
	padding-left: 15px;
	background: linear-gradient(#1a9cf0, #0f8fe8 50%, #0f86de);
}
.tray-chevron {
	position: absolute;
	left: -9px;
	top: 6px;
	display: flex;
	align-items: center;
	justify-content: center;
	width: 18px;
	height: 18px;
	border-radius: 50%;
	background: #3a7ee8;
	border: 1px solid #c8dcf8;
}
.clock {
	color: #e8f4ff;
}
```
